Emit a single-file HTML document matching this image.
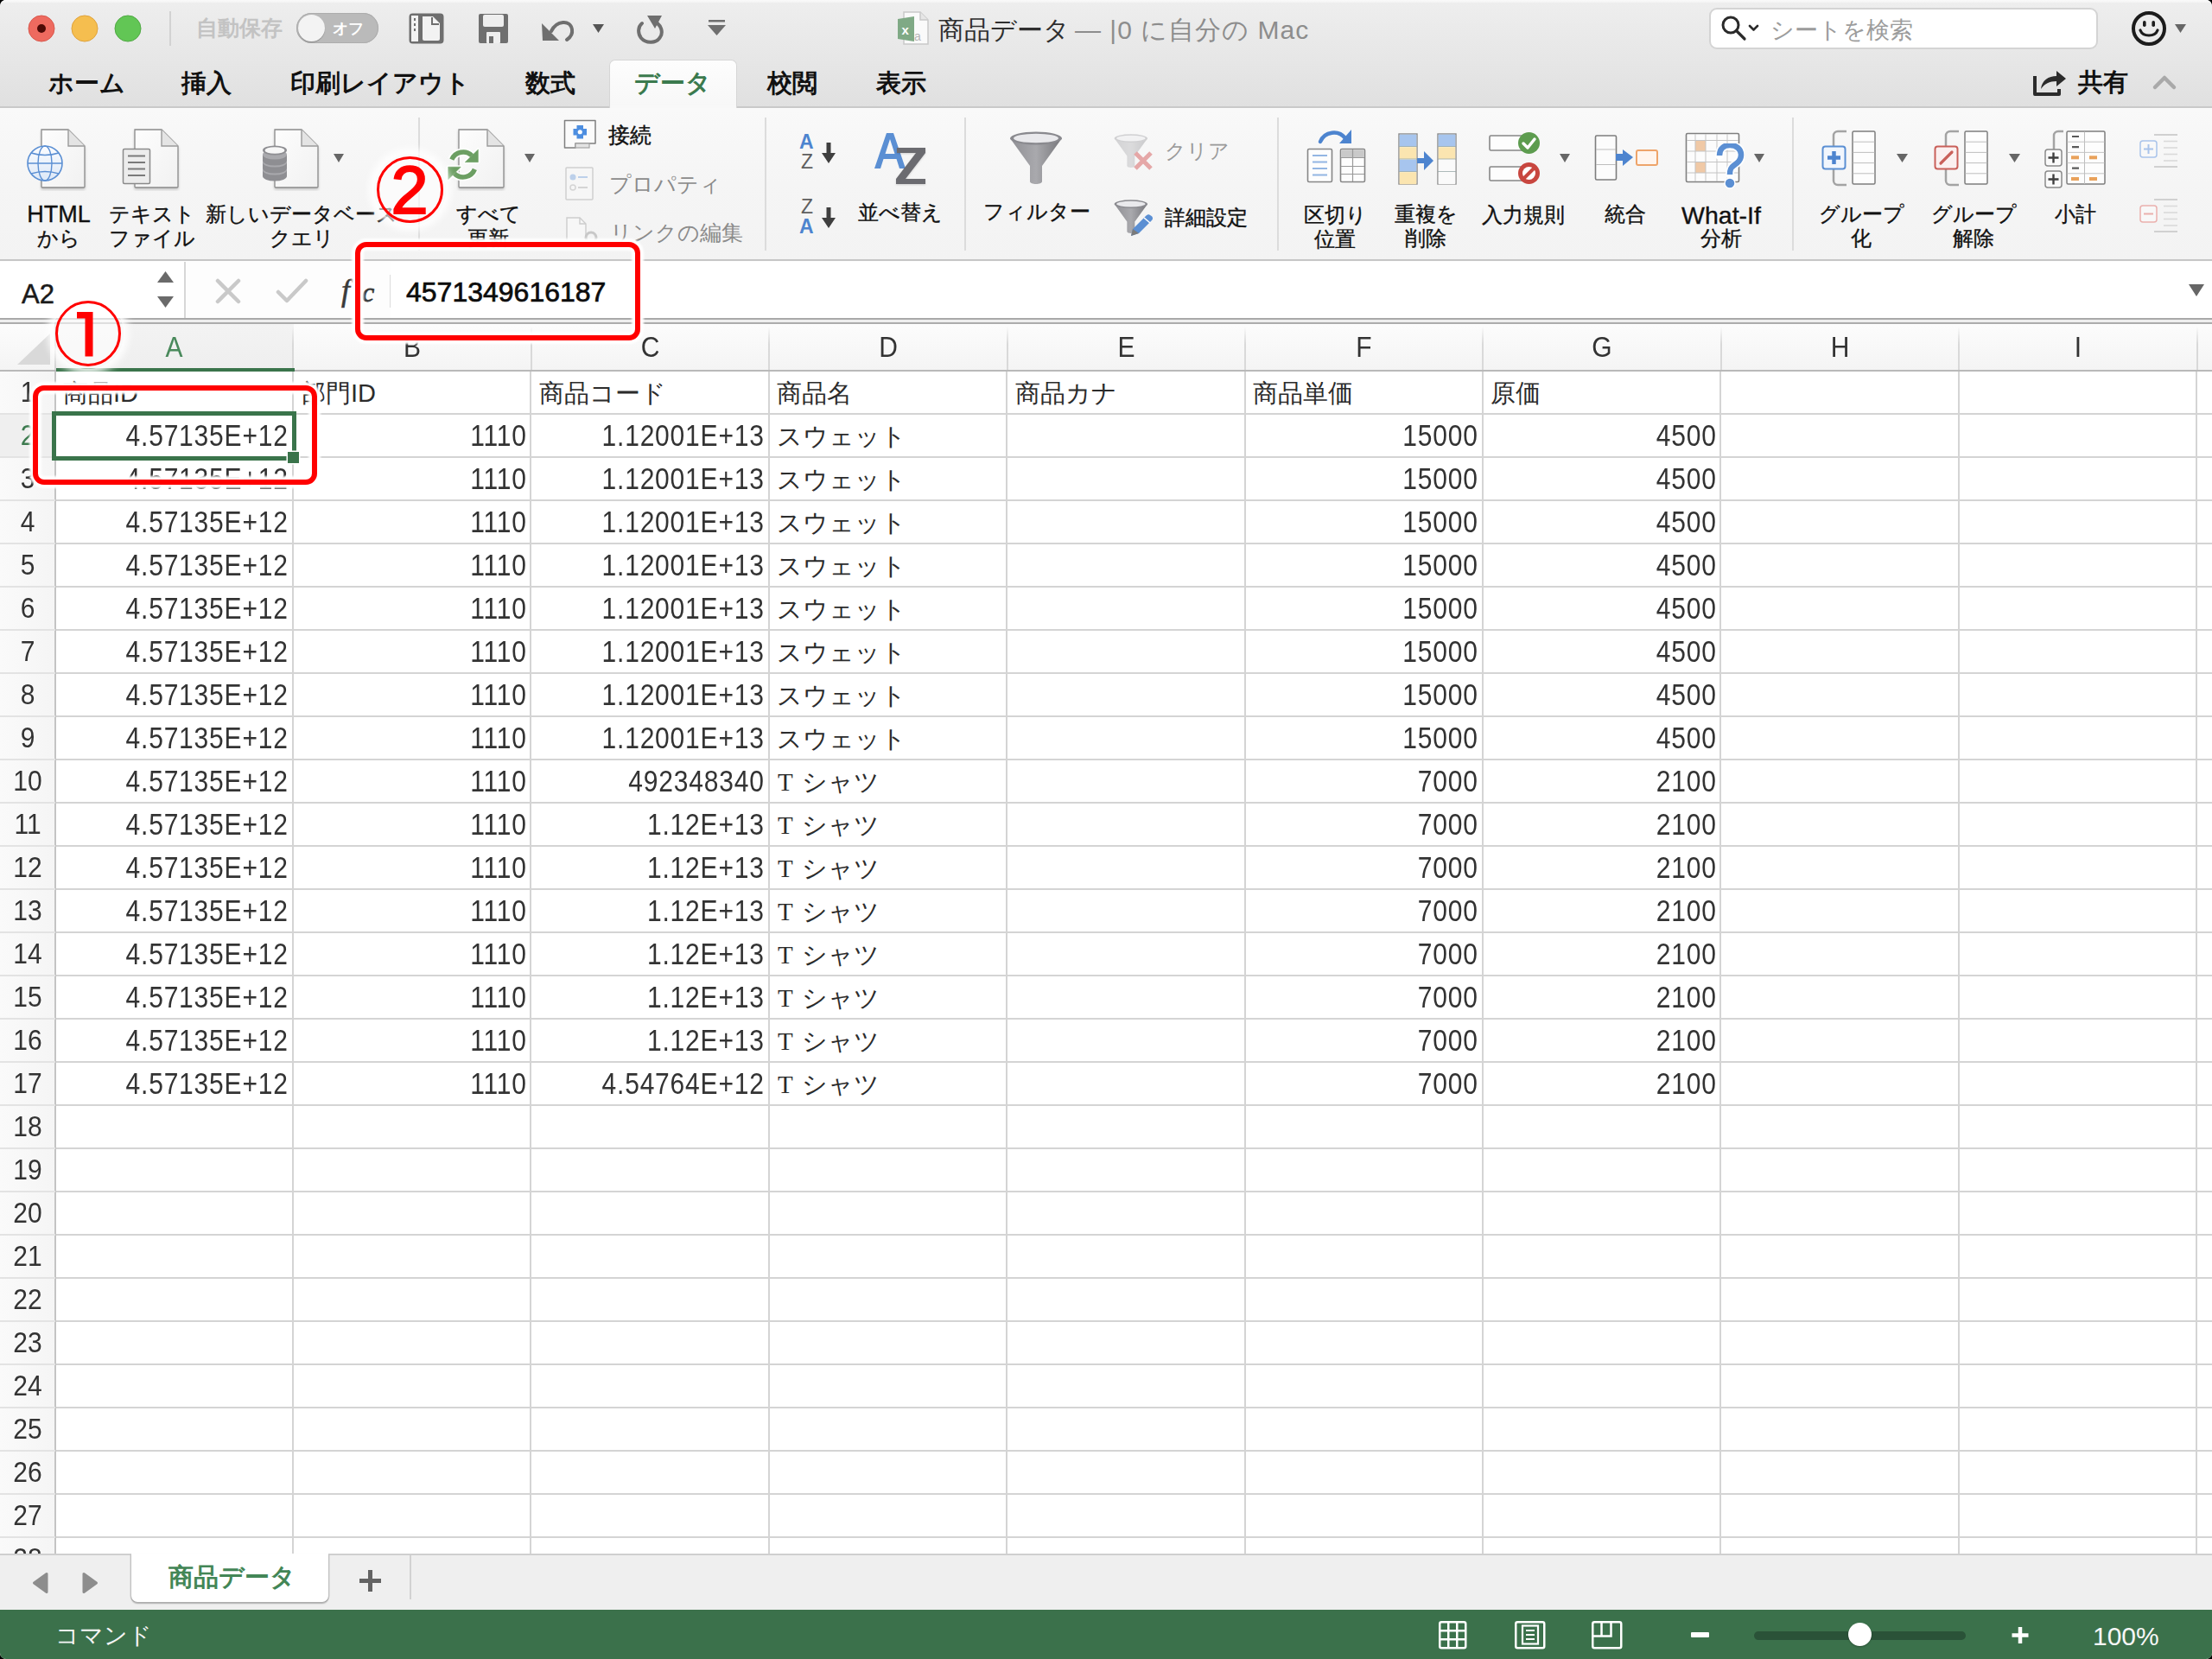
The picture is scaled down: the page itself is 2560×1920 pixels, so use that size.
<!DOCTYPE html><html><head><meta charset='utf-8'><style>
*{box-sizing:border-box;margin:0;padding:0}
html,body{width:2560px;height:1920px;overflow:hidden;background:#000;font-family:"Liberation Sans", sans-serif}
.a{position:absolute}
#win{position:absolute;left:0;top:0;width:2560px;height:1920px;border-radius:7px;overflow:hidden;background:#f4f4f4}
.t{position:absolute;white-space:nowrap;line-height:1}
.cell{position:absolute;height:50px;line-height:50px;font-size:30px;color:#1e1e1e;white-space:nowrap}
</style></head><body><div id='win'><div class='a' style='left:0px;top:0px;width:2560px;height:124px;background:linear-gradient(#eeeeee,#e8e8e8 45%,#e0e0e0)'></div><div class='a' style='left:0px;top:0px;width:2560px;height:3px;background:linear-gradient(#fafafa,#f3f3f3)'></div><div class='a' style='left:0px;top:123px;width:2560px;height:2px;background:#c9c9c9'></div><svg class='a' style='left:32px;top:17px' width='32' height='32' viewBox='0 0 32 32'><circle cx='16' cy='16' r='15' fill='#ee6a5f' stroke='#d8574c' stroke-width='1'/></svg><svg class='a' style='left:82px;top:17px' width='32' height='32' viewBox='0 0 32 32'><circle cx='16' cy='16' r='15' fill='#f5be4f' stroke='#dfa23b' stroke-width='1'/></svg><svg class='a' style='left:132px;top:17px' width='32' height='32' viewBox='0 0 32 32'><circle cx='16' cy='16' r='15' fill='#62c655' stroke='#50a844' stroke-width='1'/></svg><svg class='a' style='left:42px;top:27px' width='12' height='12' viewBox='0 0 12 12'><circle cx='6' cy='6' r='5' fill='#4e0a06'/></svg><div class='a' style='left:196px;top:13px;width:2px;height:40px;background:#d2d2d2'></div><div class='t' style='left:227px;top:20px;font-size:25px;font-weight:bold;color:#c3c3c3'>自動保存</div><div class='a' style='left:343px;top:15px;width:95px;height:35px;border-radius:18px;background:#bababa;box-shadow:inset 0 0 0 1px #adadad'></div><div class='a' style='left:345px;top:17px;width:31px;height:31px;border-radius:50%;background:#f3f3f3;box-shadow:0 1px 1px rgba(0,0,0,.25)'></div><div class='t' style='left:385px;top:24px;font-size:18px;font-weight:bold;color:#ffffff'>オフ</div><svg class='a' style='left:473px;top:15px' width='41' height='36' viewBox='0 0 41 36'><rect x='1.5' y='1.5' width='38' height='33' rx='3' fill='#6f6f6f' stroke='#6f6f6f' stroke-width='2'/><rect x='3' y='3' width='8' height='30' fill='#f2f2f2'/><rect x='6' y='6' width='2' height='3' fill='#6f6f6f'/><rect x='6' y='12' width='2' height='3' fill='#6f6f6f'/><rect x='6' y='18' width='2' height='3' fill='#6f6f6f'/><path d='M16 4 H28 L36 12 V30 a2 2 0 0 1 -2 2 H18 a2 2 0 0 1 -2 -2 Z' fill='#f2f2f2'/><path d='M27 5 V13 H35' fill='none' stroke='#6f6f6f' stroke-width='2'/></svg><svg class='a' style='left:553px;top:15px' width='36' height='36' viewBox='0 0 36 36'><path d='M3 1 H33 a2 2 0 0 1 2 2 V33 a2 2 0 0 1 -2 2 H3 a2 2 0 0 1 -2 -2 V3 a2 2 0 0 1 2 -2Z' fill='#6f6f6f'/><rect x='6' y='2' width='24' height='14' rx='2' fill='#eeeeee'/><rect x='10' y='22' width='16' height='13' rx='1' fill='#eeeeee'/><rect x='13' y='27' width='5' height='8' fill='#6f6f6f'/></svg><svg class='a' style='left:626px;top:18px' width='42' height='32' viewBox='0 0 42 32'><path d='M12 18 C18 6 34 4 36 16 C37 22 33 26 30 28' fill='none' stroke='#6f6f6f' stroke-width='4' stroke-linecap='round'/><path d='M1 9 L2 29 L21 29 Z' fill='#6f6f6f'/></svg><svg class='a' style='left:686px;top:28px' width='13' height='10' viewBox='0 0 13 10'><path d='M0 0 H13 L6.5 10Z' fill='#555'/></svg><svg class='a' style='left:734px;top:17px' width='36' height='34' viewBox='0 0 36 34'><path d='M24 8 C31 12 34 20 30 26 C26 33 14 34 8 27 C4 22 4 14 9 10' fill='none' stroke='#6f6f6f' stroke-width='4' stroke-linecap='round'/><path d='M15 1 L32 1 L24 16 Z' fill='#6f6f6f'/></svg><svg class='a' style='left:819px;top:23px' width='21' height='18' viewBox='0 0 21 18'><rect x='1' y='0' width='19' height='2.5' fill='#6f6f6f'/><path d='M0 6 H21 L10.5 18Z' fill='#6f6f6f'/></svg><svg class='a' style='left:1038px;top:13px' width='38' height='40' viewBox='0 0 38 40'><path d='M8 1 H27 L36 10 V38 H8 Z' fill='#fafafa' stroke='#c9c9c9' stroke-width='1.5'/><path d='M27 1 V10 H36' fill='#e6e6e6' stroke='#c9c9c9' stroke-width='1.5'/><path d='M1 9 L20 6 V35 L1 32 Z' fill='#7fa985'/><text x='5.5' y='27' font-family='Liberation Sans' font-size='15' font-weight='bold' fill='#fff'>x</text><text x='20' y='34' font-family='Liberation Sans' font-size='14' fill='#b5b5b5'>a</text></svg><div class='t' style='left:1086px;top:20px;font-size:30px;color:#2f2f2f'>商品データ</div><div class='t' style='left:1244px;top:20px;font-size:30px;color:#8d8d8d;letter-spacing:1px'>— |0 に自分の Mac</div><div class='a' style='left:1978px;top:9px;width:450px;height:48px;background:#fff;border:2px solid #d4d4d4;border-radius:9px'></div><svg class='a' style='left:1991px;top:17px' width='48' height='32' viewBox='0 0 48 32'><circle cx='12' cy='12' r='9' fill='none' stroke='#2a2a2a' stroke-width='3'/><path d='M18.5 18.5 L28 28' stroke='#2a2a2a' stroke-width='3.2' stroke-linecap='round'/><path d='M34 13 L38.5 17.5 L43 13' fill='none' stroke='#2a2a2a' stroke-width='2.6' stroke-linecap='round' stroke-linejoin='round'/></svg><div class='t' style='left:2049px;top:22px;font-size:27px;color:#9c9c9c'>シートを検索</div><svg class='a' style='left:2466px;top:12px' width='42' height='42' viewBox='0 0 42 42'><circle cx='21' cy='21' r='18' fill='none' stroke='#1c1c1c' stroke-width='4'/><rect x='14' y='12' width='3.6' height='7' rx='1.8' fill='#1c1c1c'/><rect x='24.4' y='12' width='3.6' height='7' rx='1.8' fill='#1c1c1c'/><path d='M11 23 C14 31 28 31 31 23' fill='none' stroke='#1c1c1c' stroke-width='3.2' stroke-linecap='round'/></svg><svg class='a' style='left:2517px;top:28px' width='13' height='10' viewBox='0 0 13 10'><path d='M0 0 H13 L6.5 10Z' fill='#666'/></svg><div class='a' style='left:706px;top:70px;width:146px;height:56px;border-radius:6px 6px 0 0;background:linear-gradient(#fdfdfd,#f7f7f7);box-shadow:0 0 0 1px #d6d6d6'></div><div class='a' style='left:707px;top:122px;width:144px;height:4px;background:#f8f8f8'></div><div class='t' style='left:56px;top:82px;font-size:29px;font-weight:bold;color:#111'>ホーム</div><div class='t' style='left:210px;top:82px;font-size:29px;font-weight:bold;color:#111'>挿入</div><div class='t' style='left:336px;top:82px;font-size:29px;font-weight:bold;color:#111'>印刷レイアウト</div><div class='t' style='left:608px;top:82px;font-size:29px;font-weight:bold;color:#111'>数式</div><div class='t' style='left:734px;top:82px;font-size:29px;font-weight:bold;color:#3b7a4e'>データ</div><div class='t' style='left:888px;top:82px;font-size:29px;font-weight:bold;color:#111'>校閲</div><div class='t' style='left:1014px;top:82px;font-size:29px;font-weight:bold;color:#111'>表示</div><svg class='a' style='left:2352px;top:78px' width='42' height='34' viewBox='0 0 42 34'><path d='M3 10 V31 H31 V25' fill='none' stroke='#2b2b2b' stroke-width='4' stroke-linejoin='round'/><path d='M10 25 C11 15 19 10 28 10 V4 L39 13 L28 22 V16 C20 16 14 19 10 25Z' fill='#2b2b2b'/></svg><div class='t' style='left:2405px;top:81px;font-size:29px;font-weight:bold;color:#111'>共有</div><svg class='a' style='left:2490px;top:84px' width='30' height='22' viewBox='0 0 30 22'><path d='M4 17 L15 6 L26 17' fill='none' stroke='#a9a9a9' stroke-width='4.5' stroke-linecap='round' stroke-linejoin='round'/></svg><div class='a' style='left:0px;top:125px;width:2560px;height:176px;background:linear-gradient(#f9f9f9,#f5f5f5 50%,#f3f3f3)'></div><div class='a' style='left:484px;top:136px;width:2px;height:154px;background:#dcdcdc'></div><div class='a' style='left:885px;top:136px;width:2px;height:154px;background:#dcdcdc'></div><div class='a' style='left:1116px;top:136px;width:2px;height:154px;background:#dcdcdc'></div><div class='a' style='left:1478px;top:136px;width:2px;height:154px;background:#dcdcdc'></div><div class='a' style='left:2074px;top:136px;width:2px;height:154px;background:#dcdcdc'></div><svg class='a' style='left:45px;top:147px' width='58' height='74' viewBox='0 0 58 74'><defs><linearGradient id='dg47' x1='0' y1='0' x2='1' y2='1'><stop offset='0' stop-color='#fdfdfd'/><stop offset='1' stop-color='#f1f1f1'/></linearGradient></defs><path d='M3 3 H34 L53 22 V69 a1 1 0 0 1 -1 1 H4 a1 1 0 0 1 -1 -1 Z' fill='url(#dg47)' stroke='#8a8a8a' stroke-width='1.3' transform='translate(0,0)' style='filter:drop-shadow(0 2px 1.5px rgba(0,0,0,.18))'/><path d='M34 3 V22 H53' fill='#e4e4e4' stroke='#9a9a9a' stroke-width='1.4'/></svg><svg class='a' style='left:30px;top:167px' width='44' height='44' viewBox='0 0 44 44'><defs><linearGradient id='gl' x1='0' y1='0' x2='0' y2='1'><stop offset='0' stop-color='#fbfcff'/><stop offset='1' stop-color='#dde8f7'/></linearGradient></defs><circle cx='22' cy='22' r='20' fill='url(#gl)' stroke='#5b8fd3' stroke-width='1.6'/><ellipse cx='22' cy='22' rx='8' ry='20' fill='none' stroke='#5b8fd3' stroke-width='1.4'/><path d='M2 22 H42' stroke='#5b8fd3' stroke-width='1.4'/><path d='M6 10 Q22 15 38 10 M6 34 Q22 29 38 34' fill='none' stroke='#5b8fd3' stroke-width='1.4'/></svg><div class='t' style='left:-82px;width:300px;top:236.0px;text-align:center;font-size:24px;color:#111;-webkit-text-stroke:.35px #111'><span style="font-size:27px;position:relative;top:-1px">HTML</span></div><div class='t' style='left:-82px;width:300px;top:263.5px;text-align:center;font-size:24px;color:#111;-webkit-text-stroke:.35px #111'>から</div><svg class='a' style='left:153px;top:147px' width='58' height='74' viewBox='0 0 58 74'><defs><linearGradient id='dg155' x1='0' y1='0' x2='1' y2='1'><stop offset='0' stop-color='#fdfdfd'/><stop offset='1' stop-color='#f1f1f1'/></linearGradient></defs><path d='M3 3 H34 L53 22 V69 a1 1 0 0 1 -1 1 H4 a1 1 0 0 1 -1 -1 Z' fill='url(#dg155)' stroke='#8a8a8a' stroke-width='1.3' transform='translate(0,0)' style='filter:drop-shadow(0 2px 1.5px rgba(0,0,0,.18))'/><path d='M34 3 V22 H53' fill='#e4e4e4' stroke='#9a9a9a' stroke-width='1.4'/></svg><svg class='a' style='left:141px;top:171px' width='34' height='43' viewBox='0 0 34 43'><rect x='1.5' y='1.5' width='31' height='40' rx='1.5' fill='#ececec' stroke='#8a8a8a' stroke-width='1.5'/><path d='M7 9.5 H27 M7 17 H27 M7 24.5 H27 M7 32 H27' stroke='#7a7a7a' stroke-width='2'/></svg><div class='t' style='left:26px;width:300px;top:236.0px;text-align:center;font-size:24px;color:#111;-webkit-text-stroke:.35px #111'>テキスト</div><div class='t' style='left:26px;width:300px;top:263.5px;text-align:center;font-size:24px;color:#111;-webkit-text-stroke:.35px #111'>ファイル</div><svg class='a' style='left:315px;top:147px' width='58' height='74' viewBox='0 0 58 74'><defs><linearGradient id='dg317' x1='0' y1='0' x2='1' y2='1'><stop offset='0' stop-color='#fdfdfd'/><stop offset='1' stop-color='#f1f1f1'/></linearGradient></defs><path d='M3 3 H34 L53 22 V69 a1 1 0 0 1 -1 1 H4 a1 1 0 0 1 -1 -1 Z' fill='url(#dg317)' stroke='#8a8a8a' stroke-width='1.3' transform='translate(0,0)' style='filter:drop-shadow(0 2px 1.5px rgba(0,0,0,.18))'/><path d='M34 3 V22 H53' fill='#e4e4e4' stroke='#9a9a9a' stroke-width='1.4'/></svg><svg class='a' style='left:303px;top:168px' width='30' height='44' viewBox='0 0 30 44'><path d='M1 29 V36 A14 5.5 0 0 0 29 36 V29 Z' fill='#8e8e92'/><ellipse cx='15' cy='29' rx='14' ry='5.5' fill='#a9a9ad'/><path d='M1 20 V27 A14 5.5 0 0 0 29 27 V20 Z' fill='#8e8e92'/><ellipse cx='15' cy='20' rx='14' ry='5.5' fill='#a9a9ad'/><path d='M1 11 V18 A14 5.5 0 0 0 29 18 V11 Z' fill='#8e8e92'/><ellipse cx='15' cy='11' rx='14' ry='5.5' fill='#a9a9ad'/><ellipse cx='15' cy='6' rx='14' ry='5.5' fill='#8e8e92'/><ellipse cx='15' cy='6' rx='11.5' ry='3.8' fill='#f7f7f7'/></svg><svg class='a' style='left:386px;top:178px' width='12' height='10' viewBox='0 0 12 10'><path d='M0 0 H12 L6.0 10Z' fill='#666'/></svg><div class='t' style='left:199px;width:300px;top:236.0px;text-align:center;font-size:24px;color:#111;-webkit-text-stroke:.35px #111'>新しいデータベース</div><div class='t' style='left:199px;width:300px;top:263.5px;text-align:center;font-size:24px;color:#111;-webkit-text-stroke:.35px #111'>クエリ</div><svg class='a' style='left:528px;top:147px' width='60' height='74' viewBox='0 0 60 74'><defs><linearGradient id='dg530' x1='0' y1='0' x2='1' y2='1'><stop offset='0' stop-color='#fdfdfd'/><stop offset='1' stop-color='#f1f1f1'/></linearGradient></defs><path d='M3 3 H36 L55 22 V69 a1 1 0 0 1 -1 1 H4 a1 1 0 0 1 -1 -1 Z' fill='url(#dg530)' stroke='#8a8a8a' stroke-width='1.3' transform='translate(0,0)' style='filter:drop-shadow(0 2px 1.5px rgba(0,0,0,.18))'/><path d='M36 3 V22 H55' fill='#e4e4e4' stroke='#9a9a9a' stroke-width='1.4'/></svg><svg class='a' style='left:516px;top:170px' width='42' height='42' viewBox='0 0 42 42'><path d='M6.8 14.6 A14.5 14.5 0 0 1 30.2 10.1' fill='none' stroke='rgba(255,255,255,.9)' stroke-width='9'/><path d='M22.2 17.7 L37.4 17.7 L37.4 3.1 Z' fill='rgba(255,255,255,.9)' stroke='rgba(255,255,255,.9)' stroke-width='4' stroke-linejoin='round'/><path d='M33.4 25.9 A14.5 14.5 0 0 1 9.75 30.75' fill='none' stroke='rgba(255,255,255,.9)' stroke-width='9'/><path d='M2.7 23.2 L17.3 23.2 L2.7 37.8 Z' fill='rgba(255,255,255,.9)' stroke='rgba(255,255,255,.9)' stroke-width='4' stroke-linejoin='round'/><path d='M6.8 14.6 A14.5 14.5 0 0 1 30.2 10.1' fill='none' stroke='#6c9f63' stroke-width='5.5'/><path d='M22.2 17.7 L37.4 17.7 L37.4 3.1 Z' fill='#6c9f63' stroke='#6c9f63' stroke-width='0.5' stroke-linejoin='round'/><path d='M33.4 25.9 A14.5 14.5 0 0 1 9.75 30.75' fill='none' stroke='#6c9f63' stroke-width='5.5'/><path d='M2.7 23.2 L17.3 23.2 L2.7 37.8 Z' fill='#6c9f63' stroke='#6c9f63' stroke-width='0.5' stroke-linejoin='round'/></svg><svg class='a' style='left:607px;top:178px' width='12' height='10' viewBox='0 0 12 10'><path d='M0 0 H12 L6.0 10Z' fill='#666'/></svg><div class='t' style='left:415px;width:300px;top:236.0px;text-align:center;font-size:24px;color:#111;-webkit-text-stroke:.35px #111'>すべて</div><div class='t' style='left:415px;width:300px;top:263.5px;text-align:center;font-size:24px;color:#111;-webkit-text-stroke:.35px #111'>更新</div><svg class='a' style='left:651px;top:137px' width='42' height='38' viewBox='0 0 42 38'><path d='M2.5 2.5 H38 V29 H15 V34 H2.5 Z' fill='#fbfbfb' stroke='#7f7f7f' stroke-width='1.5' stroke-linejoin='round'/><rect x='15' y='29' width='16' height='5' fill='#e3e3e3' stroke='#a3a3a3' stroke-width='1.2'/><rect x='16.5' y='8' width='7.5' height='15.5' fill='#4d8ee0'/><rect x='12.5' y='12' width='15.5' height='7.5' fill='#4d8ee0'/><circle cx='20.25' cy='15.75' r='2.6' fill='#fff'/></svg><div class='t' style='left:704px;top:144px;font-size:25px;color:#111;-webkit-text-stroke:.4px #111'>接続</div><svg class='a' style='left:654px;top:193px' width='34' height='40' viewBox='0 0 34 40'><rect x='1' y='1' width='31' height='37' rx='1' fill='#f6f6f6' stroke='#cfcfcf' stroke-width='1.5'/><circle cx='9' cy='12' r='3.5' fill='#bcd0ea'/><path d='M15 12 H26' stroke='#bcd0ea' stroke-width='2'/><circle cx='9' cy='24' r='3' fill='none' stroke='#d4d4d4' stroke-width='1.5'/><path d='M15 24 H26' stroke='#d4d4d4' stroke-width='2'/></svg><div class='t' style='left:705px;top:201px;font-size:25px;color:#8b8b8b'>プロパティ</div><svg class='a' style='left:654px;top:251px' width='44' height='30' viewBox='0 0 44 30'><path d='M2 1 H17 L24 8 V29 H2 Z' fill='#f7f7f7' stroke='#cdcdcd' stroke-width='1.4'/><path d='M17 1 V8 H24' fill='none' stroke='#cdcdcd' stroke-width='1.4'/><circle cx='30' cy='24' r='6' fill='none' stroke='#c8c8c8' stroke-width='3'/></svg><div class='t' style='left:706px;top:257px;font-size:25px;color:#8b8b8b'>リンクの編集</div><div class='t' style='left:925px;top:153px;font-size:23px;font-weight:bold;color:#4d84cf'>A</div><div class='t' style='left:927px;top:176px;font-size:23px;color:#5f5f5f'>Z</div><svg class='a' style='left:951px;top:165px' width='16' height='25' viewBox='0 0 16 25'><rect x='5.5' y='0' width='5' height='15' fill='#3f3f3f'/><path d='M0 12 H16 L8 24Z' fill='#3f3f3f'/></svg><div class='t' style='left:927px;top:228px;font-size:23px;color:#5f5f5f'>Z</div><div class='t' style='left:925px;top:251px;font-size:23px;font-weight:bold;color:#4d84cf'>A</div><svg class='a' style='left:951px;top:240px' width='16' height='25' viewBox='0 0 16 25'><rect x='5.5' y='0' width='5' height='15' fill='#3f3f3f'/><path d='M0 12 H16 L8 24Z' fill='#3f3f3f'/></svg><svg class='a' style='left:1008px;top:150px' width='68' height='66' viewBox='0 0 68 66'><path d='M4 45 L18 4 H26 L40 45 H33 L29.5 34 H14.5 L11 45 Z M16.5 28 H27.5 L22 11 Z' fill='#5b8fd3'/><path d='M30 21 H63 V27 L40 57 H63 V63 H29 V57 L52 27 H30 Z' fill='#6b6b70' style='filter:drop-shadow(0 1px 1px rgba(0,0,0,.15))'/></svg><div class='t' style='left:892px;width:300px;top:234.0px;text-align:center;font-size:24px;color:#111;-webkit-text-stroke:.35px #111'>並べ替え</div><svg class='a' style='left:1168px;top:152px' width='62' height='64' viewBox='0 0 62 64'><g transform='scale(1.0)' opacity='1.0'><defs><linearGradient id='fg1168152' x1='0' x2='1'><stop offset='0' stop-color='#8f8f94'/><stop offset='.5' stop-color='#a9a9ad'/><stop offset='1' stop-color='#77777c'/></linearGradient></defs><path d='M1 8 L24 40 V58 C24 62 38 62 38 58 V40 L61 8 Z' fill='url(#fg1168152)'/><ellipse cx='31' cy='8' rx='30' ry='7.5' fill='#8a8a8f'/><ellipse cx='31' cy='8' rx='26' ry='5.2' fill='#e9e9ec'/></g></svg><div class='t' style='left:1050px;width:300px;top:233.0px;text-align:center;font-size:24px;color:#111;-webkit-text-stroke:.35px #111'>フィルター</div><svg class='a' style='left:1289px;top:155px' width='39' height='40' viewBox='0 0 39 40'><g transform='scale(0.64)' opacity='0.35'><defs><linearGradient id='fg1289155' x1='0' x2='1'><stop offset='0' stop-color='#8f8f94'/><stop offset='.5' stop-color='#a9a9ad'/><stop offset='1' stop-color='#77777c'/></linearGradient></defs><path d='M1 8 L24 40 V58 C24 62 38 62 38 58 V40 L61 8 Z' fill='url(#fg1289155)'/><ellipse cx='31' cy='8' rx='30' ry='7.5' fill='#8a8a8f'/><ellipse cx='31' cy='8' rx='26' ry='5.2' fill='#e9e9ec'/></g></svg><svg class='a' style='left:1310px;top:173px' width='26' height='26' viewBox='0 0 26 26'><path d='M4 4 L22 22 M22 4 L4 22' stroke='#e5a7a7' stroke-width='5'/></svg><div class='t' style='left:1348px;top:163px;font-size:24px;color:#9a9a9a'>クリア</div><svg class='a' style='left:1289px;top:231px' width='39' height='40' viewBox='0 0 39 40'><g transform='scale(0.64)' opacity='1.0'><defs><linearGradient id='fg1289231' x1='0' x2='1'><stop offset='0' stop-color='#8f8f94'/><stop offset='.5' stop-color='#a9a9ad'/><stop offset='1' stop-color='#77777c'/></linearGradient></defs><path d='M1 8 L24 40 V58 C24 62 38 62 38 58 V40 L61 8 Z' fill='url(#fg1289231)'/><ellipse cx='31' cy='8' rx='30' ry='7.5' fill='#8a8a8f'/><ellipse cx='31' cy='8' rx='26' ry='5.2' fill='#e9e9ec'/></g></svg><svg class='a' style='left:1306px;top:247px' width='30' height='28' viewBox='0 0 30 28'><path d='M25 2 C28 3 29 6 27 8 L12 23 L3 26 L5 18 L20 3 C22 1 24 1 25 2Z' fill='#5b8fd3'/><path d='M3 26 L5 18 L12 23Z' fill='#7a7a7a'/><path d='M18 5 L25 11' stroke='#fff' stroke-width='1.5'/></svg><div class='t' style='left:1348px;top:240px;font-size:24px;color:#111;-webkit-text-stroke:.4px #111'>詳細設定</div><svg class='a' style='left:1525px;top:148px' width='42' height='20' viewBox='0 0 42 20'><path d='M3 16 C8 4 24 2 32 12' fill='none' stroke='#4d84cf' stroke-width='4.5' stroke-linecap='round'/><path d='M39 2 V18 H25 Z' fill='#4d84cf'/></svg><svg class='a' style='left:1512px;top:171px' width='31' height='42' viewBox='0 0 31 42'><rect x='1.5' y='1.5' width='28' height='38' rx='1.5' fill='#fdfdfd' stroke='#868686' stroke-width='1.6'/><path d='M7 9 H24 M7 16.5 H24 M7 24 H24 M7 31.5 H24' stroke='#93b6e3' stroke-width='2'/></svg><svg class='a' style='left:1550px;top:171px' width='32' height='42' viewBox='0 0 32 42'><rect x='1.5' y='1.5' width='28' height='38' rx='1.5' fill='#fdfdfd' stroke='#868686' stroke-width='1.6'/><rect x='2.3' y='2.3' width='26.4' height='9' fill='#c9c9c9'/><path d='M15.5 2 V39 M2 11.5 H29 M2 21.5 H29 M2 30.5 H29' stroke='#9a9a9a' stroke-width='1.2'/></svg><div class='t' style='left:1395px;width:300px;top:237.0px;text-align:center;font-size:24px;color:#111;-webkit-text-stroke:.35px #111'>区切り</div><div class='t' style='left:1395px;width:300px;top:264.5px;text-align:center;font-size:24px;color:#111;-webkit-text-stroke:.35px #111'>位置</div><svg class='a' style='left:1618px;top:154px' width='23' height='60' viewBox='0 0 23 60'><rect x='1' y='1' width='21' height='58' fill='#fff' stroke='#8a8a8a' stroke-width='1.4'/><rect x='1.7' y='1.7' width='19.6' height='14' fill='#a7c5ee'/><rect x='1.7' y='16.2' width='19.6' height='14' fill='#fbe5b0'/><rect x='1.7' y='30.7' width='19.6' height='14' fill='#a7c5ee'/><rect x='1.7' y='45.2' width='19.6' height='14' fill='#fbe5b0'/><path d='M1 15.5 H22 M1 30 H22 M1 44.5 H22' stroke='#9aa' stroke-width='0.8'/></svg><svg class='a' style='left:1663px;top:154px' width='23' height='60' viewBox='0 0 23 60'><rect x='1' y='1' width='21' height='58' fill='#fff' stroke='#8a8a8a' stroke-width='1.4'/><rect x='1.7' y='1.7' width='19.6' height='14' fill='#a7c5ee'/><rect x='1.7' y='16.2' width='19.6' height='14' fill='#fbe5b0'/><rect x='1.7' y='30.7' width='19.6' height='14' fill='#fafafa'/><rect x='1.7' y='45.2' width='19.6' height='14' fill='#fafafa'/><path d='M1 15.5 H22 M1 30 H22 M1 44.5 H22' stroke='#9aa' stroke-width='0.8'/></svg><svg class='a' style='left:1640px;top:175px' width='20' height='22' viewBox='0 0 20 22'><rect x='0' y='8' width='9' height='6' fill='#4d84cf'/><path d='M8 0 L19 11 L8 22Z' fill='#4d84cf'/></svg><div class='t' style='left:1500px;width:300px;top:236.0px;text-align:center;font-size:24px;color:#111;-webkit-text-stroke:.35px #111'>重複を</div><div class='t' style='left:1500px;width:300px;top:263.5px;text-align:center;font-size:24px;color:#111;-webkit-text-stroke:.35px #111'>削除</div><svg class='a' style='left:1722px;top:153px' width='62' height='62' viewBox='0 0 62 62'><rect x='2' y='4' width='40' height='17' rx='1.5' fill='#fdfdfd' stroke='#868686' stroke-width='1.6'/><rect x='2' y='40' width='40' height='16' rx='1.5' fill='#fdfdfd' stroke='#868686' stroke-width='1.6'/><circle cx='47.5' cy='12.5' r='12.5' fill='#5d9c4f'/><path d='M41 13 L46 18 L54 8' fill='none' stroke='#fff' stroke-width='3.5' stroke-linecap='round' stroke-linejoin='round'/><circle cx='47.5' cy='47.5' r='12.5' fill='#c8463f'/><circle cx='47.5' cy='47.5' r='7.5' fill='#fff'/><path d='M41 54 L54 41' stroke='#c8463f' stroke-width='4'/></svg><svg class='a' style='left:1805px;top:178px' width='12' height='10' viewBox='0 0 12 10'><path d='M0 0 H12 L6.0 10Z' fill='#666'/></svg><div class='t' style='left:1613px;width:300px;top:237.0px;text-align:center;font-size:24px;color:#111;-webkit-text-stroke:.35px #111'>入力規則</div><svg class='a' style='left:1845px;top:156px' width='76' height='54' viewBox='0 0 76 54'><rect x='1.5' y='1' width='24' height='51' rx='1.5' fill='#fcfcfc' stroke='#7d7d7d' stroke-width='1.6'/><path d='M2 17 H25 M2 34.5 H25' stroke='#bdbdbd' stroke-width='1'/><rect x='25' y='22' width='10' height='8' fill='#4d84cf'/><path d='M33 17 L45 26 L33 36Z' fill='#4d84cf'/><rect x='49' y='18' width='24' height='17' rx='2' fill='#fff5ee' stroke='#eea46a' stroke-width='2'/></svg><div class='t' style='left:1731px;width:300px;top:236.0px;text-align:center;font-size:24px;color:#111;-webkit-text-stroke:.35px #111'>統合</div><svg class='a' style='left:1950px;top:153px' width='65' height='60' viewBox='0 0 65 60'><rect x='1.5' y='1.5' width='61' height='56' rx='1.5' fill='#fcfcfc' stroke='#7f7f7f' stroke-width='1.6'/><rect x='12' y='9.5' width='12' height='12.5' fill='#f0c9a6'/><rect x='12' y='34.5' width='12' height='12.5' fill='#f0c9a6'/><path d='M12 2 V57' stroke='#c4c4c4' stroke-width='1'/><path d='M24 2 V57' stroke='#c4c4c4' stroke-width='1'/><path d='M37 2 V57' stroke='#c4c4c4' stroke-width='1'/><path d='M49 2 V57' stroke='#c4c4c4' stroke-width='1'/><path d='M2 9.5 H62' stroke='#c4c4c4' stroke-width='1'/><path d='M2 22 H62' stroke='#c4c4c4' stroke-width='1'/><path d='M2 34.5 H62' stroke='#c4c4c4' stroke-width='1'/><path d='M2 47 H62' stroke='#c4c4c4' stroke-width='1'/></svg><svg class='a' style='left:1985px;top:166px' width='34' height='54' viewBox='0 0 34 54'><path d='M5 14 C5 5 11 2 17 2 C25 2 30 7 30 13 C30 20 25 23 21 26 C18 28 17 30 17 36' fill='none' stroke='#fff' stroke-width='10' stroke-linecap='round'/><path d='M5 14 C5 5 11 2 17 2 C25 2 30 7 30 13 C30 20 25 23 21 26 C18 28 17 30 17 36' fill='none' stroke='#5b8fd3' stroke-width='6.5' stroke-linecap='butt'/><circle cx='17' cy='46' r='6' fill='#5b8fd3' stroke='#fff' stroke-width='1.5'/></svg><svg class='a' style='left:2030px;top:178px' width='12' height='10' viewBox='0 0 12 10'><path d='M0 0 H12 L6.0 10Z' fill='#666'/></svg><div class='t' style='left:1842px;width:300px;top:236.0px;text-align:center;font-size:24px;color:#111;-webkit-text-stroke:.35px #111'><span style="font-size:28.5px;position:relative;top:-1px">What-If</span></div><div class='t' style='left:1842px;width:300px;top:263.5px;text-align:center;font-size:24px;color:#111;-webkit-text-stroke:.35px #111'>分析</div><svg class='a' style='left:2119px;top:150px' width='20' height='66' viewBox='0 0 20 66'><path d='M18 2 H8 a5 5 0 0 0 -5 5 V59 a5 5 0 0 0 5 5 H18' fill='none' stroke='#a3a3a3' stroke-width='2.5'/></svg><svg class='a' style='left:2143px;top:151px' width='28' height='63' viewBox='0 0 28 63'><rect x='1' y='1' width='26' height='61' rx='1.5' fill='#fdfdfd' stroke='#7d7d7d' stroke-width='1.5'/><path d='M1.5 13.2 H26.5' stroke='#bdbdbd' stroke-width='1'/><path d='M1.5 25.4 H26.5' stroke='#bdbdbd' stroke-width='1'/><path d='M1.5 37.6 H26.5' stroke='#bdbdbd' stroke-width='1'/><path d='M1.5 49.8 H26.5' stroke='#bdbdbd' stroke-width='1'/></svg><svg class='a' style='left:2108px;top:168px' width='29' height='29' viewBox='0 0 29 29'><rect x='1.5' y='1.5' width='26' height='26' rx='3' fill='#f1f6fd' stroke='#5b8fd3' stroke-width='2'/><path d='M14.5 7 V22 M7 14.5 H22' stroke='#4d84cf' stroke-width='4.5'/></svg><svg class='a' style='left:2195px;top:178px' width='13' height='10' viewBox='0 0 13 10'><path d='M0 0 H13 L6.5 10Z' fill='#666'/></svg><div class='t' style='left:2004px;width:300px;top:236.0px;text-align:center;font-size:24px;color:#111;-webkit-text-stroke:.35px #111'>グループ</div><div class='t' style='left:2004px;width:300px;top:263.5px;text-align:center;font-size:24px;color:#111;-webkit-text-stroke:.35px #111'>化</div><svg class='a' style='left:2249px;top:150px' width='20' height='66' viewBox='0 0 20 66'><path d='M18 2 H8 a5 5 0 0 0 -5 5 V59 a5 5 0 0 0 5 5 H18' fill='none' stroke='#a3a3a3' stroke-width='2.5'/></svg><svg class='a' style='left:2273px;top:151px' width='28' height='63' viewBox='0 0 28 63'><rect x='1' y='1' width='26' height='61' rx='1.5' fill='#fdfdfd' stroke='#7d7d7d' stroke-width='1.5'/><path d='M1.5 13.2 H26.5' stroke='#bdbdbd' stroke-width='1'/><path d='M1.5 25.4 H26.5' stroke='#bdbdbd' stroke-width='1'/><path d='M1.5 37.6 H26.5' stroke='#bdbdbd' stroke-width='1'/><path d='M1.5 49.8 H26.5' stroke='#bdbdbd' stroke-width='1'/></svg><svg class='a' style='left:2238px;top:168px' width='29' height='29' viewBox='0 0 29 29'><rect x='1.5' y='1.5' width='26' height='26' rx='3' fill='#fbf0f0' stroke='#c9605a' stroke-width='2'/><path d='M8 21 L21 8' stroke='#c9605a' stroke-width='3.2' stroke-linecap='round'/></svg><svg class='a' style='left:2325px;top:178px' width='13' height='10' viewBox='0 0 13 10'><path d='M0 0 H13 L6.5 10Z' fill='#666'/></svg><div class='t' style='left:2134px;width:300px;top:236.0px;text-align:center;font-size:24px;color:#111;-webkit-text-stroke:.35px #111'>グループ</div><div class='t' style='left:2134px;width:300px;top:263.5px;text-align:center;font-size:24px;color:#111;-webkit-text-stroke:.35px #111'>解除</div><svg class='a' style='left:2374px;top:150px' width='16' height='40' viewBox='0 0 16 40'><path d='M14 2 H8 a5 5 0 0 0 -5 5 V40' fill='none' stroke='#a3a3a3' stroke-width='2.5'/></svg><svg class='a' style='left:2391px;top:151px' width='46' height='63' viewBox='0 0 46 63'><rect x='1' y='1' width='44' height='61' rx='1.5' fill='#fdfdfd' stroke='#7d7d7d' stroke-width='1.5'/><path d='M21.5 1.5 V62' stroke='#bdbdbd' stroke-width='1'/><path d='M1.5 13.2 H44.5' stroke='#c4c4c4' stroke-width='1'/><path d='M1.5 25.4 H44.5' stroke='#c4c4c4' stroke-width='1'/><path d='M1.5 37.6 H44.5' stroke='#c4c4c4' stroke-width='1'/><path d='M1.5 49.8 H44.5' stroke='#c4c4c4' stroke-width='1'/><path d='M7 7 H15 M7 19.2 H15 M7 43.6 H15' stroke='#5a5a5a' stroke-width='2.2'/><rect x='6' y='29.3' width='9' height='4' fill='#e9a25b'/><rect x='27' y='29.3' width='9' height='4' fill='#e9a25b'/><rect x='6' y='54' width='9' height='4' fill='#e9a25b'/><rect x='27' y='54' width='9' height='4' fill='#e9a25b'/></svg><svg class='a' style='left:2366px;top:172px' width='21' height='21' viewBox='0 0 21 21'><rect x='1' y='1' width='19' height='19' rx='3' fill='#fafafa' stroke='#8a8a8a' stroke-width='1.5'/><path d='M10.5 4.5 V16.5 M4.5 10.5 H16.5' stroke='#3f3f3f' stroke-width='2.4'/></svg><svg class='a' style='left:2366px;top:197px' width='21' height='21' viewBox='0 0 21 21'><rect x='1' y='1' width='19' height='19' rx='3' fill='#fafafa' stroke='#8a8a8a' stroke-width='1.5'/><path d='M10.5 4.5 V16.5 M4.5 10.5 H16.5' stroke='#3f3f3f' stroke-width='2.4'/></svg><div class='t' style='left:2252px;width:300px;top:236.0px;text-align:center;font-size:24px;color:#111;-webkit-text-stroke:.35px #111'>小計</div><svg class='a' style='left:2476px;top:155px' width='46' height='40' viewBox='0 0 46 40'><rect x='1' y='8' width='19' height='19' rx='3' fill='#f8f8f8' stroke='#a9c3ea' stroke-width='1.5'/><path d='M5 17.5 H16' stroke='#a9c3ea' stroke-width='2'/><path d='M10.5 12 V23' stroke='#a9c3ea' stroke-width='2'/><path d='M17 1 H44 M17 38 H44' stroke='#d0d0d0' stroke-width='2'/><path d='M28 8.5 H44' stroke='#dadada' stroke-width='1.6'/><path d='M28 16 H44' stroke='#dadada' stroke-width='1.6'/><path d='M28 23.5 H44' stroke='#dadada' stroke-width='1.6'/><path d='M28 31 H44' stroke='#dadada' stroke-width='1.6'/></svg><svg class='a' style='left:2476px;top:230px' width='46' height='40' viewBox='0 0 46 40'><rect x='1' y='8' width='19' height='19' rx='3' fill='#f8f8f8' stroke='#eab0ad' stroke-width='1.5'/><path d='M5 17.5 H16' stroke='#eab0ad' stroke-width='2'/><path d='M17 1 H44 M17 38 H44' stroke='#d0d0d0' stroke-width='2'/><path d='M28 8.5 H44' stroke='#dadada' stroke-width='1.6'/><path d='M28 16 H44' stroke='#dadada' stroke-width='1.6'/><path d='M28 23.5 H44' stroke='#dadada' stroke-width='1.6'/><path d='M28 31 H44' stroke='#dadada' stroke-width='1.6'/></svg><div class='a' style='left:0px;top:301px;width:2560px;height:74px;background:#fdfdfd'></div><div class='a' style='left:0px;top:300px;width:2560px;height:2px;background:#c6c6c6'></div><div class='a' style='left:0px;top:303px;width:213px;height:65px;background:#ffffff'></div><div class='a' style='left:213px;top:303px;width:2px;height:65px;background:#d7d7d7'></div><div class='t' style='left:25px;top:325px;font-size:31px;color:#1a1a1a;-webkit-text-stroke:.5px #1a1a1a'>A2</div><svg class='a' style='left:182px;top:314px' width='20' height='44' viewBox='0 0 20 44'><path d='M0 13 L9.5 0 L19 13Z' fill='#6a6a6a'/><path d='M0 29 H19 L9.5 42Z' fill='#6a6a6a'/></svg><svg class='a' style='left:248px;top:321px' width='32' height='32' viewBox='0 0 32 32'><path d='M4 4 L28 28 M28 4 L4 28' stroke='#c9c9c9' stroke-width='4.5' stroke-linecap='round'/></svg><svg class='a' style='left:319px;top:321px' width='38' height='32' viewBox='0 0 38 32'><path d='M3 17 L13 27 L35 4' fill='none' stroke='#c9c9c9' stroke-width='4.5' stroke-linecap='round' stroke-linejoin='round'/></svg><div class='t' style='left:395px;top:318px;font-family:&quot;Liberation Serif&quot;,serif;font-size:36px;color:#3a3a3a;-webkit-text-stroke:.6px #3a3a3a'><i>f</i></div><div class='t' style='left:419px;top:322px;font-family:&quot;Liberation Serif&quot;,serif;font-size:32px;color:#3a3a3a;-webkit-text-stroke:.8px #3a3a3a'><i>c</i></div><div class='a' style='left:451px;top:318px;width:2px;height:38px;background:#dcdcdc'></div><div class='a' style='left:452px;top:303px;width:2108px;height:65px;background:#ffffff'></div><div class='t' style='left:470px;top:322px;font-size:32px;color:#0c0c0c;-webkit-text-stroke:.7px #0c0c0c'>4571349616187</div><svg class='a' style='left:2533px;top:329px' width='18' height='14' viewBox='0 0 18 14'><path d='M0 0 H18 L9 14Z' fill='#666'/></svg><div class='a' style='left:0px;top:368px;width:2560px;height:2px;background:#a9a9a9'></div><div class='a' style='left:0px;top:370px;width:2560px;height:4px;background:#eeeeee'></div><div class='a' style='left:0px;top:373px;width:2560px;height:2px;background:#acacac'></div><div class='a' style='left:0px;top:375px;width:2560px;height:54px;background:linear-gradient(#fcfcfc,#f4f4f4)'></div><div class='a' style='left:65px;top:375px;width:275px;height:54px;background:linear-gradient(#f3f3f3,#eeeeee)'></div><svg class='a' style='left:20px;top:386px' width='39' height='37' viewBox='0 0 39 37'><path d='M38 0 V36 H0 Z' fill='#d9d9d9'/></svg><div class='a' style='left:63px;top:375px;width:2px;height:54px;background:#d4d4d4'></div><div class='a' style='left:338px;top:378px;width:2px;height:51px;background:linear-gradient(rgba(217,217,217,0),#d9d9d9 40%)'></div><div class='a' style='left:614px;top:378px;width:2px;height:51px;background:linear-gradient(rgba(217,217,217,0),#d9d9d9 40%)'></div><div class='a' style='left:889px;top:378px;width:2px;height:51px;background:linear-gradient(rgba(217,217,217,0),#d9d9d9 40%)'></div><div class='a' style='left:1165px;top:378px;width:2px;height:51px;background:linear-gradient(rgba(217,217,217,0),#d9d9d9 40%)'></div><div class='a' style='left:1440px;top:378px;width:2px;height:51px;background:linear-gradient(rgba(217,217,217,0),#d9d9d9 40%)'></div><div class='a' style='left:1715px;top:378px;width:2px;height:51px;background:linear-gradient(rgba(217,217,217,0),#d9d9d9 40%)'></div><div class='a' style='left:1991px;top:378px;width:2px;height:51px;background:linear-gradient(rgba(217,217,217,0),#d9d9d9 40%)'></div><div class='a' style='left:2266px;top:378px;width:2px;height:51px;background:linear-gradient(rgba(217,217,217,0),#d9d9d9 40%)'></div><div class='a' style='left:2542px;top:378px;width:2px;height:51px;background:linear-gradient(rgba(217,217,217,0),#d9d9d9 40%)'></div><div class='a' style='left:0px;top:428px;width:2560px;height:2px;background:#b9b9b9'></div><div class='a' style='left:65px;top:426px;width:276px;height:4px;background:#3a744b'></div><div class='t' style='left:64px;width:275px;top:388px;text-align:center;font-size:30px;color:#4a8a5c;transform:scaleY(1.12);transform-origin:50% 80%'>A</div><div class='t' style='left:339px;width:276px;top:388px;text-align:center;font-size:30px;color:#333;transform:scaleY(1.12);transform-origin:50% 80%'>B</div><div class='t' style='left:615px;width:275px;top:388px;text-align:center;font-size:30px;color:#333;transform:scaleY(1.12);transform-origin:50% 80%'>C</div><div class='t' style='left:890px;width:276px;top:388px;text-align:center;font-size:30px;color:#333;transform:scaleY(1.12);transform-origin:50% 80%'>D</div><div class='t' style='left:1166px;width:275px;top:388px;text-align:center;font-size:30px;color:#333;transform:scaleY(1.12);transform-origin:50% 80%'>E</div><div class='t' style='left:1441px;width:275px;top:388px;text-align:center;font-size:30px;color:#333;transform:scaleY(1.12);transform-origin:50% 80%'>F</div><div class='t' style='left:1716px;width:276px;top:388px;text-align:center;font-size:30px;color:#333;transform:scaleY(1.12);transform-origin:50% 80%'>G</div><div class='t' style='left:1992px;width:275px;top:388px;text-align:center;font-size:30px;color:#333;transform:scaleY(1.12);transform-origin:50% 80%'>H</div><div class='t' style='left:2267px;width:276px;top:388px;text-align:center;font-size:30px;color:#333;transform:scaleY(1.12);transform-origin:50% 80%'>I</div><div class='a' style='left:0px;top:430px;width:2560px;height:1368px;background:#ffffff'></div><div class='a' style='left:0px;top:430px;width:64px;height:1368px;background:linear-gradient(90deg,#fafafa,#f5f5f5)'></div><div class='a' style='left:0px;top:479px;width:64px;height:50px;background:#efefef'></div><div class='a' style='left:63px;top:430px;width:2px;height:1368px;background:#c4c4c4'></div><div class='a' style='left:0px;top:478px;width:64px;height:2px;background:#e3e3e3'></div><div class='a' style='left:65px;top:478px;width:2495px;height:2px;background:#d4d4d4'></div><div class='a' style='left:0px;top:528px;width:64px;height:2px;background:#e3e3e3'></div><div class='a' style='left:65px;top:528px;width:2495px;height:2px;background:#d4d4d4'></div><div class='a' style='left:0px;top:578px;width:64px;height:2px;background:#e3e3e3'></div><div class='a' style='left:65px;top:578px;width:2495px;height:2px;background:#d4d4d4'></div><div class='a' style='left:0px;top:628px;width:64px;height:2px;background:#e3e3e3'></div><div class='a' style='left:65px;top:628px;width:2495px;height:2px;background:#d4d4d4'></div><div class='a' style='left:0px;top:678px;width:64px;height:2px;background:#e3e3e3'></div><div class='a' style='left:65px;top:678px;width:2495px;height:2px;background:#d4d4d4'></div><div class='a' style='left:0px;top:728px;width:64px;height:2px;background:#e3e3e3'></div><div class='a' style='left:65px;top:728px;width:2495px;height:2px;background:#d4d4d4'></div><div class='a' style='left:0px;top:778px;width:64px;height:2px;background:#e3e3e3'></div><div class='a' style='left:65px;top:778px;width:2495px;height:2px;background:#d4d4d4'></div><div class='a' style='left:0px;top:828px;width:64px;height:2px;background:#e3e3e3'></div><div class='a' style='left:65px;top:828px;width:2495px;height:2px;background:#d4d4d4'></div><div class='a' style='left:0px;top:878px;width:64px;height:2px;background:#e3e3e3'></div><div class='a' style='left:65px;top:878px;width:2495px;height:2px;background:#d4d4d4'></div><div class='a' style='left:0px;top:928px;width:64px;height:2px;background:#e3e3e3'></div><div class='a' style='left:65px;top:928px;width:2495px;height:2px;background:#d4d4d4'></div><div class='a' style='left:0px;top:978px;width:64px;height:2px;background:#e3e3e3'></div><div class='a' style='left:65px;top:978px;width:2495px;height:2px;background:#d4d4d4'></div><div class='a' style='left:0px;top:1028px;width:64px;height:2px;background:#e3e3e3'></div><div class='a' style='left:65px;top:1028px;width:2495px;height:2px;background:#d4d4d4'></div><div class='a' style='left:0px;top:1078px;width:64px;height:2px;background:#e3e3e3'></div><div class='a' style='left:65px;top:1078px;width:2495px;height:2px;background:#d4d4d4'></div><div class='a' style='left:0px;top:1128px;width:64px;height:2px;background:#e3e3e3'></div><div class='a' style='left:65px;top:1128px;width:2495px;height:2px;background:#d4d4d4'></div><div class='a' style='left:0px;top:1178px;width:64px;height:2px;background:#e3e3e3'></div><div class='a' style='left:65px;top:1178px;width:2495px;height:2px;background:#d4d4d4'></div><div class='a' style='left:0px;top:1228px;width:64px;height:2px;background:#e3e3e3'></div><div class='a' style='left:65px;top:1228px;width:2495px;height:2px;background:#d4d4d4'></div><div class='a' style='left:0px;top:1278px;width:64px;height:2px;background:#e3e3e3'></div><div class='a' style='left:65px;top:1278px;width:2495px;height:2px;background:#d4d4d4'></div><div class='a' style='left:0px;top:1328px;width:64px;height:2px;background:#e3e3e3'></div><div class='a' style='left:65px;top:1328px;width:2495px;height:2px;background:#d4d4d4'></div><div class='a' style='left:0px;top:1378px;width:64px;height:2px;background:#e3e3e3'></div><div class='a' style='left:65px;top:1378px;width:2495px;height:2px;background:#d4d4d4'></div><div class='a' style='left:0px;top:1428px;width:64px;height:2px;background:#e3e3e3'></div><div class='a' style='left:65px;top:1428px;width:2495px;height:2px;background:#d4d4d4'></div><div class='a' style='left:0px;top:1478px;width:64px;height:2px;background:#e3e3e3'></div><div class='a' style='left:65px;top:1478px;width:2495px;height:2px;background:#d4d4d4'></div><div class='a' style='left:0px;top:1528px;width:64px;height:2px;background:#e3e3e3'></div><div class='a' style='left:65px;top:1528px;width:2495px;height:2px;background:#d4d4d4'></div><div class='a' style='left:0px;top:1578px;width:64px;height:2px;background:#e3e3e3'></div><div class='a' style='left:65px;top:1578px;width:2495px;height:2px;background:#d4d4d4'></div><div class='a' style='left:0px;top:1628px;width:64px;height:2px;background:#e3e3e3'></div><div class='a' style='left:65px;top:1628px;width:2495px;height:2px;background:#d4d4d4'></div><div class='a' style='left:0px;top:1678px;width:64px;height:2px;background:#e3e3e3'></div><div class='a' style='left:65px;top:1678px;width:2495px;height:2px;background:#d4d4d4'></div><div class='a' style='left:0px;top:1728px;width:64px;height:2px;background:#e3e3e3'></div><div class='a' style='left:65px;top:1728px;width:2495px;height:2px;background:#d4d4d4'></div><div class='a' style='left:0px;top:1778px;width:64px;height:2px;background:#e3e3e3'></div><div class='a' style='left:65px;top:1778px;width:2495px;height:2px;background:#d4d4d4'></div><div class='a' style='left:338px;top:430px;width:2px;height:1368px;background:#d4d4d4'></div><div class='a' style='left:613px;top:430px;width:2px;height:1368px;background:#d4d4d4'></div><div class='a' style='left:889px;top:430px;width:2px;height:1368px;background:#d4d4d4'></div><div class='a' style='left:1164px;top:430px;width:2px;height:1368px;background:#d4d4d4'></div><div class='a' style='left:1440px;top:430px;width:2px;height:1368px;background:#d4d4d4'></div><div class='a' style='left:1715px;top:430px;width:2px;height:1368px;background:#d4d4d4'></div><div class='a' style='left:1990px;top:430px;width:2px;height:1368px;background:#d4d4d4'></div><div class='a' style='left:2266px;top:430px;width:2px;height:1368px;background:#d4d4d4'></div><div class='a' style='left:2541px;top:430px;width:2px;height:1368px;background:#d4d4d4'></div><div class='t' style='left:0;width:64px;top:440px;text-align:center;font-size:30px;color:#333;transform:scaleY(1.1);transform-origin:50% 80%'>1</div><div class='t' style='left:0;width:64px;top:490px;text-align:center;font-size:30px;color:#3d7b4f;transform:scaleY(1.1);transform-origin:50% 80%'>2</div><div class='t' style='left:0;width:64px;top:540px;text-align:center;font-size:30px;color:#333;transform:scaleY(1.1);transform-origin:50% 80%'>3</div><div class='t' style='left:0;width:64px;top:590px;text-align:center;font-size:30px;color:#333;transform:scaleY(1.1);transform-origin:50% 80%'>4</div><div class='t' style='left:0;width:64px;top:640px;text-align:center;font-size:30px;color:#333;transform:scaleY(1.1);transform-origin:50% 80%'>5</div><div class='t' style='left:0;width:64px;top:690px;text-align:center;font-size:30px;color:#333;transform:scaleY(1.1);transform-origin:50% 80%'>6</div><div class='t' style='left:0;width:64px;top:740px;text-align:center;font-size:30px;color:#333;transform:scaleY(1.1);transform-origin:50% 80%'>7</div><div class='t' style='left:0;width:64px;top:790px;text-align:center;font-size:30px;color:#333;transform:scaleY(1.1);transform-origin:50% 80%'>8</div><div class='t' style='left:0;width:64px;top:840px;text-align:center;font-size:30px;color:#333;transform:scaleY(1.1);transform-origin:50% 80%'>9</div><div class='t' style='left:0;width:64px;top:890px;text-align:center;font-size:30px;color:#333;transform:scaleY(1.1);transform-origin:50% 80%'>10</div><div class='t' style='left:0;width:64px;top:940px;text-align:center;font-size:30px;color:#333;transform:scaleY(1.1);transform-origin:50% 80%'>11</div><div class='t' style='left:0;width:64px;top:990px;text-align:center;font-size:30px;color:#333;transform:scaleY(1.1);transform-origin:50% 80%'>12</div><div class='t' style='left:0;width:64px;top:1040px;text-align:center;font-size:30px;color:#333;transform:scaleY(1.1);transform-origin:50% 80%'>13</div><div class='t' style='left:0;width:64px;top:1090px;text-align:center;font-size:30px;color:#333;transform:scaleY(1.1);transform-origin:50% 80%'>14</div><div class='t' style='left:0;width:64px;top:1140px;text-align:center;font-size:30px;color:#333;transform:scaleY(1.1);transform-origin:50% 80%'>15</div><div class='t' style='left:0;width:64px;top:1190px;text-align:center;font-size:30px;color:#333;transform:scaleY(1.1);transform-origin:50% 80%'>16</div><div class='t' style='left:0;width:64px;top:1240px;text-align:center;font-size:30px;color:#333;transform:scaleY(1.1);transform-origin:50% 80%'>17</div><div class='t' style='left:0;width:64px;top:1290px;text-align:center;font-size:30px;color:#333;transform:scaleY(1.1);transform-origin:50% 80%'>18</div><div class='t' style='left:0;width:64px;top:1340px;text-align:center;font-size:30px;color:#333;transform:scaleY(1.1);transform-origin:50% 80%'>19</div><div class='t' style='left:0;width:64px;top:1390px;text-align:center;font-size:30px;color:#333;transform:scaleY(1.1);transform-origin:50% 80%'>20</div><div class='t' style='left:0;width:64px;top:1440px;text-align:center;font-size:30px;color:#333;transform:scaleY(1.1);transform-origin:50% 80%'>21</div><div class='t' style='left:0;width:64px;top:1490px;text-align:center;font-size:30px;color:#333;transform:scaleY(1.1);transform-origin:50% 80%'>22</div><div class='t' style='left:0;width:64px;top:1540px;text-align:center;font-size:30px;color:#333;transform:scaleY(1.1);transform-origin:50% 80%'>23</div><div class='t' style='left:0;width:64px;top:1590px;text-align:center;font-size:30px;color:#333;transform:scaleY(1.1);transform-origin:50% 80%'>24</div><div class='t' style='left:0;width:64px;top:1640px;text-align:center;font-size:30px;color:#333;transform:scaleY(1.1);transform-origin:50% 80%'>25</div><div class='t' style='left:0;width:64px;top:1690px;text-align:center;font-size:30px;color:#333;transform:scaleY(1.1);transform-origin:50% 80%'>26</div><div class='t' style='left:0;width:64px;top:1740px;text-align:center;font-size:30px;color:#333;transform:scaleY(1.1);transform-origin:50% 80%'>27</div><div class='t' style='left:0;width:64px;top:1790px;text-align:center;font-size:30px;color:#333;transform:scaleY(1.1);transform-origin:50% 80%'>28</div><div class='t' style='left:73px;top:441px;font-size:29px;color:#2c2c2c'>商品ID</div><div class='t' style='left:348px;top:441px;font-size:29px;color:#2c2c2c'>部門ID</div><div class='t' style='left:624px;top:441px;font-size:29px;color:#2c2c2c'>商品コード</div><div class='t' style='left:899px;top:441px;font-size:29px;color:#2c2c2c'>商品名</div><div class='t' style='left:1175px;top:441px;font-size:29px;color:#2c2c2c'>商品カナ</div><div class='t' style='left:1450px;top:441px;font-size:29px;color:#2c2c2c'>商品単価</div><div class='t' style='left:1725px;top:441px;font-size:29px;color:#2c2c2c'>原価</div><div class='t' style='left:64px;width:269.7px;top:490.5px;text-align:right;font-size:30px;letter-spacing:.8px;color:#333;transform:scaleY(1.16);transform-origin:50% 80%'>4.57135E+12</div><div class='t' style='left:339px;width:270.7px;top:490.5px;text-align:right;font-size:30px;letter-spacing:.8px;color:#333;transform:scaleY(1.16);transform-origin:50% 80%'>1110</div><div class='t' style='left:615px;width:269.7px;top:490.5px;text-align:right;font-size:30px;letter-spacing:.8px;color:#333;transform:scaleY(1.16);transform-origin:50% 80%'>1.12001E+13</div><div class='t' style='left:899px;top:491px;font-size:29px;color:#2c2c2c'>スウェット</div><div class='t' style='left:1441px;width:269.7px;top:490.5px;text-align:right;font-size:30px;letter-spacing:.8px;color:#333;transform:scaleY(1.16);transform-origin:50% 80%'>15000</div><div class='t' style='left:1716px;width:270.7px;top:490.5px;text-align:right;font-size:30px;letter-spacing:.8px;color:#333;transform:scaleY(1.16);transform-origin:50% 80%'>4500</div><div class='t' style='left:64px;width:269.7px;top:540.5px;text-align:right;font-size:30px;letter-spacing:.8px;color:#333;transform:scaleY(1.16);transform-origin:50% 80%'>4.57135E+12</div><div class='t' style='left:339px;width:270.7px;top:540.5px;text-align:right;font-size:30px;letter-spacing:.8px;color:#333;transform:scaleY(1.16);transform-origin:50% 80%'>1110</div><div class='t' style='left:615px;width:269.7px;top:540.5px;text-align:right;font-size:30px;letter-spacing:.8px;color:#333;transform:scaleY(1.16);transform-origin:50% 80%'>1.12001E+13</div><div class='t' style='left:899px;top:541px;font-size:29px;color:#2c2c2c'>スウェット</div><div class='t' style='left:1441px;width:269.7px;top:540.5px;text-align:right;font-size:30px;letter-spacing:.8px;color:#333;transform:scaleY(1.16);transform-origin:50% 80%'>15000</div><div class='t' style='left:1716px;width:270.7px;top:540.5px;text-align:right;font-size:30px;letter-spacing:.8px;color:#333;transform:scaleY(1.16);transform-origin:50% 80%'>4500</div><div class='t' style='left:64px;width:269.7px;top:590.5px;text-align:right;font-size:30px;letter-spacing:.8px;color:#333;transform:scaleY(1.16);transform-origin:50% 80%'>4.57135E+12</div><div class='t' style='left:339px;width:270.7px;top:590.5px;text-align:right;font-size:30px;letter-spacing:.8px;color:#333;transform:scaleY(1.16);transform-origin:50% 80%'>1110</div><div class='t' style='left:615px;width:269.7px;top:590.5px;text-align:right;font-size:30px;letter-spacing:.8px;color:#333;transform:scaleY(1.16);transform-origin:50% 80%'>1.12001E+13</div><div class='t' style='left:899px;top:591px;font-size:29px;color:#2c2c2c'>スウェット</div><div class='t' style='left:1441px;width:269.7px;top:590.5px;text-align:right;font-size:30px;letter-spacing:.8px;color:#333;transform:scaleY(1.16);transform-origin:50% 80%'>15000</div><div class='t' style='left:1716px;width:270.7px;top:590.5px;text-align:right;font-size:30px;letter-spacing:.8px;color:#333;transform:scaleY(1.16);transform-origin:50% 80%'>4500</div><div class='t' style='left:64px;width:269.7px;top:640.5px;text-align:right;font-size:30px;letter-spacing:.8px;color:#333;transform:scaleY(1.16);transform-origin:50% 80%'>4.57135E+12</div><div class='t' style='left:339px;width:270.7px;top:640.5px;text-align:right;font-size:30px;letter-spacing:.8px;color:#333;transform:scaleY(1.16);transform-origin:50% 80%'>1110</div><div class='t' style='left:615px;width:269.7px;top:640.5px;text-align:right;font-size:30px;letter-spacing:.8px;color:#333;transform:scaleY(1.16);transform-origin:50% 80%'>1.12001E+13</div><div class='t' style='left:899px;top:641px;font-size:29px;color:#2c2c2c'>スウェット</div><div class='t' style='left:1441px;width:269.7px;top:640.5px;text-align:right;font-size:30px;letter-spacing:.8px;color:#333;transform:scaleY(1.16);transform-origin:50% 80%'>15000</div><div class='t' style='left:1716px;width:270.7px;top:640.5px;text-align:right;font-size:30px;letter-spacing:.8px;color:#333;transform:scaleY(1.16);transform-origin:50% 80%'>4500</div><div class='t' style='left:64px;width:269.7px;top:690.5px;text-align:right;font-size:30px;letter-spacing:.8px;color:#333;transform:scaleY(1.16);transform-origin:50% 80%'>4.57135E+12</div><div class='t' style='left:339px;width:270.7px;top:690.5px;text-align:right;font-size:30px;letter-spacing:.8px;color:#333;transform:scaleY(1.16);transform-origin:50% 80%'>1110</div><div class='t' style='left:615px;width:269.7px;top:690.5px;text-align:right;font-size:30px;letter-spacing:.8px;color:#333;transform:scaleY(1.16);transform-origin:50% 80%'>1.12001E+13</div><div class='t' style='left:899px;top:691px;font-size:29px;color:#2c2c2c'>スウェット</div><div class='t' style='left:1441px;width:269.7px;top:690.5px;text-align:right;font-size:30px;letter-spacing:.8px;color:#333;transform:scaleY(1.16);transform-origin:50% 80%'>15000</div><div class='t' style='left:1716px;width:270.7px;top:690.5px;text-align:right;font-size:30px;letter-spacing:.8px;color:#333;transform:scaleY(1.16);transform-origin:50% 80%'>4500</div><div class='t' style='left:64px;width:269.7px;top:740.5px;text-align:right;font-size:30px;letter-spacing:.8px;color:#333;transform:scaleY(1.16);transform-origin:50% 80%'>4.57135E+12</div><div class='t' style='left:339px;width:270.7px;top:740.5px;text-align:right;font-size:30px;letter-spacing:.8px;color:#333;transform:scaleY(1.16);transform-origin:50% 80%'>1110</div><div class='t' style='left:615px;width:269.7px;top:740.5px;text-align:right;font-size:30px;letter-spacing:.8px;color:#333;transform:scaleY(1.16);transform-origin:50% 80%'>1.12001E+13</div><div class='t' style='left:899px;top:741px;font-size:29px;color:#2c2c2c'>スウェット</div><div class='t' style='left:1441px;width:269.7px;top:740.5px;text-align:right;font-size:30px;letter-spacing:.8px;color:#333;transform:scaleY(1.16);transform-origin:50% 80%'>15000</div><div class='t' style='left:1716px;width:270.7px;top:740.5px;text-align:right;font-size:30px;letter-spacing:.8px;color:#333;transform:scaleY(1.16);transform-origin:50% 80%'>4500</div><div class='t' style='left:64px;width:269.7px;top:790.5px;text-align:right;font-size:30px;letter-spacing:.8px;color:#333;transform:scaleY(1.16);transform-origin:50% 80%'>4.57135E+12</div><div class='t' style='left:339px;width:270.7px;top:790.5px;text-align:right;font-size:30px;letter-spacing:.8px;color:#333;transform:scaleY(1.16);transform-origin:50% 80%'>1110</div><div class='t' style='left:615px;width:269.7px;top:790.5px;text-align:right;font-size:30px;letter-spacing:.8px;color:#333;transform:scaleY(1.16);transform-origin:50% 80%'>1.12001E+13</div><div class='t' style='left:899px;top:791px;font-size:29px;color:#2c2c2c'>スウェット</div><div class='t' style='left:1441px;width:269.7px;top:790.5px;text-align:right;font-size:30px;letter-spacing:.8px;color:#333;transform:scaleY(1.16);transform-origin:50% 80%'>15000</div><div class='t' style='left:1716px;width:270.7px;top:790.5px;text-align:right;font-size:30px;letter-spacing:.8px;color:#333;transform:scaleY(1.16);transform-origin:50% 80%'>4500</div><div class='t' style='left:64px;width:269.7px;top:840.5px;text-align:right;font-size:30px;letter-spacing:.8px;color:#333;transform:scaleY(1.16);transform-origin:50% 80%'>4.57135E+12</div><div class='t' style='left:339px;width:270.7px;top:840.5px;text-align:right;font-size:30px;letter-spacing:.8px;color:#333;transform:scaleY(1.16);transform-origin:50% 80%'>1110</div><div class='t' style='left:615px;width:269.7px;top:840.5px;text-align:right;font-size:30px;letter-spacing:.8px;color:#333;transform:scaleY(1.16);transform-origin:50% 80%'>1.12001E+13</div><div class='t' style='left:899px;top:841px;font-size:29px;color:#2c2c2c'>スウェット</div><div class='t' style='left:1441px;width:269.7px;top:840.5px;text-align:right;font-size:30px;letter-spacing:.8px;color:#333;transform:scaleY(1.16);transform-origin:50% 80%'>15000</div><div class='t' style='left:1716px;width:270.7px;top:840.5px;text-align:right;font-size:30px;letter-spacing:.8px;color:#333;transform:scaleY(1.16);transform-origin:50% 80%'>4500</div><div class='t' style='left:64px;width:269.7px;top:890.5px;text-align:right;font-size:30px;letter-spacing:.8px;color:#333;transform:scaleY(1.16);transform-origin:50% 80%'>4.57135E+12</div><div class='t' style='left:339px;width:270.7px;top:890.5px;text-align:right;font-size:30px;letter-spacing:.8px;color:#333;transform:scaleY(1.16);transform-origin:50% 80%'>1110</div><div class='t' style='left:615px;width:269.7px;top:890.5px;text-align:right;font-size:30px;letter-spacing:.8px;color:#333;transform:scaleY(1.16);transform-origin:50% 80%'>492348340</div><div class='t' style='left:899px;top:891px;font-size:29px;color:#2c2c2c'><span style="display:inline-block;width:29px;padding-left:1px;font-family:&quot;Liberation Serif&quot;,serif;font-size:29px;color:#2a2a2a">T</span>シャツ</div><div class='t' style='left:1441px;width:269.7px;top:890.5px;text-align:right;font-size:30px;letter-spacing:.8px;color:#333;transform:scaleY(1.16);transform-origin:50% 80%'>7000</div><div class='t' style='left:1716px;width:270.7px;top:890.5px;text-align:right;font-size:30px;letter-spacing:.8px;color:#333;transform:scaleY(1.16);transform-origin:50% 80%'>2100</div><div class='t' style='left:64px;width:269.7px;top:940.5px;text-align:right;font-size:30px;letter-spacing:.8px;color:#333;transform:scaleY(1.16);transform-origin:50% 80%'>4.57135E+12</div><div class='t' style='left:339px;width:270.7px;top:940.5px;text-align:right;font-size:30px;letter-spacing:.8px;color:#333;transform:scaleY(1.16);transform-origin:50% 80%'>1110</div><div class='t' style='left:615px;width:269.7px;top:940.5px;text-align:right;font-size:30px;letter-spacing:.8px;color:#333;transform:scaleY(1.16);transform-origin:50% 80%'>1.12E+13</div><div class='t' style='left:899px;top:941px;font-size:29px;color:#2c2c2c'><span style="display:inline-block;width:29px;padding-left:1px;font-family:&quot;Liberation Serif&quot;,serif;font-size:29px;color:#2a2a2a">T</span>シャツ</div><div class='t' style='left:1441px;width:269.7px;top:940.5px;text-align:right;font-size:30px;letter-spacing:.8px;color:#333;transform:scaleY(1.16);transform-origin:50% 80%'>7000</div><div class='t' style='left:1716px;width:270.7px;top:940.5px;text-align:right;font-size:30px;letter-spacing:.8px;color:#333;transform:scaleY(1.16);transform-origin:50% 80%'>2100</div><div class='t' style='left:64px;width:269.7px;top:990.5px;text-align:right;font-size:30px;letter-spacing:.8px;color:#333;transform:scaleY(1.16);transform-origin:50% 80%'>4.57135E+12</div><div class='t' style='left:339px;width:270.7px;top:990.5px;text-align:right;font-size:30px;letter-spacing:.8px;color:#333;transform:scaleY(1.16);transform-origin:50% 80%'>1110</div><div class='t' style='left:615px;width:269.7px;top:990.5px;text-align:right;font-size:30px;letter-spacing:.8px;color:#333;transform:scaleY(1.16);transform-origin:50% 80%'>1.12E+13</div><div class='t' style='left:899px;top:991px;font-size:29px;color:#2c2c2c'><span style="display:inline-block;width:29px;padding-left:1px;font-family:&quot;Liberation Serif&quot;,serif;font-size:29px;color:#2a2a2a">T</span>シャツ</div><div class='t' style='left:1441px;width:269.7px;top:990.5px;text-align:right;font-size:30px;letter-spacing:.8px;color:#333;transform:scaleY(1.16);transform-origin:50% 80%'>7000</div><div class='t' style='left:1716px;width:270.7px;top:990.5px;text-align:right;font-size:30px;letter-spacing:.8px;color:#333;transform:scaleY(1.16);transform-origin:50% 80%'>2100</div><div class='t' style='left:64px;width:269.7px;top:1040.5px;text-align:right;font-size:30px;letter-spacing:.8px;color:#333;transform:scaleY(1.16);transform-origin:50% 80%'>4.57135E+12</div><div class='t' style='left:339px;width:270.7px;top:1040.5px;text-align:right;font-size:30px;letter-spacing:.8px;color:#333;transform:scaleY(1.16);transform-origin:50% 80%'>1110</div><div class='t' style='left:615px;width:269.7px;top:1040.5px;text-align:right;font-size:30px;letter-spacing:.8px;color:#333;transform:scaleY(1.16);transform-origin:50% 80%'>1.12E+13</div><div class='t' style='left:899px;top:1041px;font-size:29px;color:#2c2c2c'><span style="display:inline-block;width:29px;padding-left:1px;font-family:&quot;Liberation Serif&quot;,serif;font-size:29px;color:#2a2a2a">T</span>シャツ</div><div class='t' style='left:1441px;width:269.7px;top:1040.5px;text-align:right;font-size:30px;letter-spacing:.8px;color:#333;transform:scaleY(1.16);transform-origin:50% 80%'>7000</div><div class='t' style='left:1716px;width:270.7px;top:1040.5px;text-align:right;font-size:30px;letter-spacing:.8px;color:#333;transform:scaleY(1.16);transform-origin:50% 80%'>2100</div><div class='t' style='left:64px;width:269.7px;top:1090.5px;text-align:right;font-size:30px;letter-spacing:.8px;color:#333;transform:scaleY(1.16);transform-origin:50% 80%'>4.57135E+12</div><div class='t' style='left:339px;width:270.7px;top:1090.5px;text-align:right;font-size:30px;letter-spacing:.8px;color:#333;transform:scaleY(1.16);transform-origin:50% 80%'>1110</div><div class='t' style='left:615px;width:269.7px;top:1090.5px;text-align:right;font-size:30px;letter-spacing:.8px;color:#333;transform:scaleY(1.16);transform-origin:50% 80%'>1.12E+13</div><div class='t' style='left:899px;top:1091px;font-size:29px;color:#2c2c2c'><span style="display:inline-block;width:29px;padding-left:1px;font-family:&quot;Liberation Serif&quot;,serif;font-size:29px;color:#2a2a2a">T</span>シャツ</div><div class='t' style='left:1441px;width:269.7px;top:1090.5px;text-align:right;font-size:30px;letter-spacing:.8px;color:#333;transform:scaleY(1.16);transform-origin:50% 80%'>7000</div><div class='t' style='left:1716px;width:270.7px;top:1090.5px;text-align:right;font-size:30px;letter-spacing:.8px;color:#333;transform:scaleY(1.16);transform-origin:50% 80%'>2100</div><div class='t' style='left:64px;width:269.7px;top:1140.5px;text-align:right;font-size:30px;letter-spacing:.8px;color:#333;transform:scaleY(1.16);transform-origin:50% 80%'>4.57135E+12</div><div class='t' style='left:339px;width:270.7px;top:1140.5px;text-align:right;font-size:30px;letter-spacing:.8px;color:#333;transform:scaleY(1.16);transform-origin:50% 80%'>1110</div><div class='t' style='left:615px;width:269.7px;top:1140.5px;text-align:right;font-size:30px;letter-spacing:.8px;color:#333;transform:scaleY(1.16);transform-origin:50% 80%'>1.12E+13</div><div class='t' style='left:899px;top:1141px;font-size:29px;color:#2c2c2c'><span style="display:inline-block;width:29px;padding-left:1px;font-family:&quot;Liberation Serif&quot;,serif;font-size:29px;color:#2a2a2a">T</span>シャツ</div><div class='t' style='left:1441px;width:269.7px;top:1140.5px;text-align:right;font-size:30px;letter-spacing:.8px;color:#333;transform:scaleY(1.16);transform-origin:50% 80%'>7000</div><div class='t' style='left:1716px;width:270.7px;top:1140.5px;text-align:right;font-size:30px;letter-spacing:.8px;color:#333;transform:scaleY(1.16);transform-origin:50% 80%'>2100</div><div class='t' style='left:64px;width:269.7px;top:1190.5px;text-align:right;font-size:30px;letter-spacing:.8px;color:#333;transform:scaleY(1.16);transform-origin:50% 80%'>4.57135E+12</div><div class='t' style='left:339px;width:270.7px;top:1190.5px;text-align:right;font-size:30px;letter-spacing:.8px;color:#333;transform:scaleY(1.16);transform-origin:50% 80%'>1110</div><div class='t' style='left:615px;width:269.7px;top:1190.5px;text-align:right;font-size:30px;letter-spacing:.8px;color:#333;transform:scaleY(1.16);transform-origin:50% 80%'>1.12E+13</div><div class='t' style='left:899px;top:1191px;font-size:29px;color:#2c2c2c'><span style="display:inline-block;width:29px;padding-left:1px;font-family:&quot;Liberation Serif&quot;,serif;font-size:29px;color:#2a2a2a">T</span>シャツ</div><div class='t' style='left:1441px;width:269.7px;top:1190.5px;text-align:right;font-size:30px;letter-spacing:.8px;color:#333;transform:scaleY(1.16);transform-origin:50% 80%'>7000</div><div class='t' style='left:1716px;width:270.7px;top:1190.5px;text-align:right;font-size:30px;letter-spacing:.8px;color:#333;transform:scaleY(1.16);transform-origin:50% 80%'>2100</div><div class='t' style='left:64px;width:269.7px;top:1240.5px;text-align:right;font-size:30px;letter-spacing:.8px;color:#333;transform:scaleY(1.16);transform-origin:50% 80%'>4.57135E+12</div><div class='t' style='left:339px;width:270.7px;top:1240.5px;text-align:right;font-size:30px;letter-spacing:.8px;color:#333;transform:scaleY(1.16);transform-origin:50% 80%'>1110</div><div class='t' style='left:615px;width:269.7px;top:1240.5px;text-align:right;font-size:30px;letter-spacing:.8px;color:#333;transform:scaleY(1.16);transform-origin:50% 80%'>4.54764E+12</div><div class='t' style='left:899px;top:1241px;font-size:29px;color:#2c2c2c'><span style="display:inline-block;width:29px;padding-left:1px;font-family:&quot;Liberation Serif&quot;,serif;font-size:29px;color:#2a2a2a">T</span>シャツ</div><div class='t' style='left:1441px;width:269.7px;top:1240.5px;text-align:right;font-size:30px;letter-spacing:.8px;color:#333;transform:scaleY(1.16);transform-origin:50% 80%'>7000</div><div class='t' style='left:1716px;width:270.7px;top:1240.5px;text-align:right;font-size:30px;letter-spacing:.8px;color:#333;transform:scaleY(1.16);transform-origin:50% 80%'>2100</div><div class='a' style='left:60px;top:476px;width:283px;height:57px;border:5px solid #3a744b'></div><div class='a' style='left:333px;top:523px;width:13px;height:13px;background:#3a744b;box-shadow:0 0 0 1.5px #fff'></div><div class='a' style='left:0px;top:1798px;width:2560px;height:65px;background:#efefef'></div><div class='a' style='left:0px;top:1798px;width:2560px;height:2px;background:#cfcfcf'></div><svg class='a' style='left:37px;top:1819px' width='19' height='26' viewBox='0 0 19 26'><path d='M17 2.5 V23.5 L2.5 13Z' fill='#8d8d8d' stroke='#8d8d8d' stroke-width='3' stroke-linejoin='round'/></svg><svg class='a' style='left:95px;top:1819px' width='19' height='26' viewBox='0 0 19 26'><path d='M2 2.5 V23.5 L16.5 13Z' fill='#8d8d8d' stroke='#8d8d8d' stroke-width='3' stroke-linejoin='round'/></svg><div class='a' style='left:152px;top:1798px;width:228px;height:56px;background:#ffffff;border-radius:0 0 7px 7px;box-shadow:0 1.5px 1.5px rgba(0,0,0,.28),1.5px 0 0 #cdcdcd,-1.5px 0 0 #cdcdcd'></div><div class='t' style='left:195px;top:1811px;font-size:29px;font-weight:bold;color:#438656'>商品データ</div><svg class='a' style='left:415px;top:1816px' width='27' height='27' viewBox='0 0 27 27'><path d='M13.5 1 V26 M1 13.5 H26' stroke='#636363' stroke-width='5'/></svg><div class='a' style='left:474px;top:1800px;width:2px;height:51px;background:#d2d2d2'></div><div class='a' style='left:0px;top:1863px;width:2560px;height:57px;background:#3b714b'></div><div class='t' style='left:64px;top:1880px;font-size:27px;color:#f4f4f4'>コマンド</div><svg class='a' style='left:1665px;top:1876px' width='33' height='33' viewBox='0 0 33 33'><rect x='1.25' y='1.25' width='30' height='30' rx='2' fill='none' stroke='#ffffff' stroke-width='2.5'/><path d='M11.25 1 V31 M21.25 1 V31 M1 11.25 H31 M1 21.25 H31' stroke='#ffffff' stroke-width='2.5'/></svg><svg class='a' style='left:1753px;top:1876px' width='36' height='33' viewBox='0 0 36 33'><rect x='1.25' y='1.25' width='33' height='30' rx='2' fill='none' stroke='#ffffff' stroke-width='2.5'/><rect x='9' y='5.5' width='18' height='21' fill='none' stroke='#ffffff' stroke-width='2.2'/><path d='M13 11 H23 M13 16 H23 M13 21 H23' stroke='#ffffff' stroke-width='2.2'/></svg><svg class='a' style='left:1842px;top:1876px' width='36' height='33' viewBox='0 0 36 33'><rect x='1.25' y='1.25' width='33' height='30' rx='2' fill='none' stroke='#ffffff' stroke-width='2.5'/><path d='M2 17.5 H22.5 V2 M11.5 2 V17.5' fill='none' stroke='#ffffff' stroke-width='2.5'/></svg><div class='a' style='left:1957px;top:1889px;width:21px;height:6px;background:#fff;border-radius:1px'></div><div class='a' style='left:2030px;top:1888px;width:245px;height:10px;background:#2a5238;border-radius:5px'></div><div class='a' style='left:2139px;top:1878px;width:27px;height:27px;background:#fff;border-radius:50%;box-shadow:0 1px 2px rgba(0,0,0,.3)'></div><svg class='a' style='left:2327px;top:1882px' width='22' height='21' viewBox='0 0 22 21'><path d='M11 1 V20 M1.5 10.5 H20.5' stroke='#ffffff' stroke-width='4.5'/></svg><div class='t' style='left:2422px;top:1879px;font-size:30px;color:#f6f6f6'>100%</div><div class='a' style='left:34px;top:442px;width:337px;height:123px;border:14.5px solid rgba(255,255,255,.97);border-radius:17px;filter:blur(.8px)'></div><div class='a' style='left:38px;top:446px;width:329px;height:115px;border:6.5px solid #ff0000;border-radius:13px'></div><div class='a' style='left:407px;top:276px;width:338px;height:122px;border:14.5px solid rgba(255,255,255,.97);border-radius:17px;filter:blur(.8px)'></div><div class='a' style='left:411px;top:280px;width:330px;height:114px;border:6.5px solid #ff0000;border-radius:13px'></div><div class='a' style='left:60.5px;top:345.0px;width:82px;height:82px;border-radius:50%;background:rgba(255,255,255,.6);box-shadow:0 0 8px 6px rgba(255,255,255,.9)'></div><div class='a' style='left:63.5px;top:348.0px;width:76px;height:76px;border-radius:50%;border:3.2px solid #ff0000'></div><div class='t' style='left:84px;top:355px;font-size:72px;color:#ff0000;-webkit-text-stroke:2px #ff0000'></div><svg class='a' style='left:86px;top:358px' width='26' height='58' viewBox='0 0 26 58'><path d='M3 3 H21.5 V54.5 H12.5 V10.5 H3 Z' fill='#ff0000'/></svg><div class='a' style='left:433.0px;top:177.5px;width:83px;height:83px;border-radius:50%;background:rgba(255,255,255,.6);box-shadow:0 0 8px 6px rgba(255,255,255,.9)'></div><div class='a' style='left:436.0px;top:180.5px;width:77px;height:77px;border-radius:50%;border:3.2px solid #ff0000'></div><div class='t' style='left:452.5px;top:181.5px;font-size:77.5px;color:#ff0000;-webkit-text-stroke:2px #ff0000'>2</div></div></body></html>
